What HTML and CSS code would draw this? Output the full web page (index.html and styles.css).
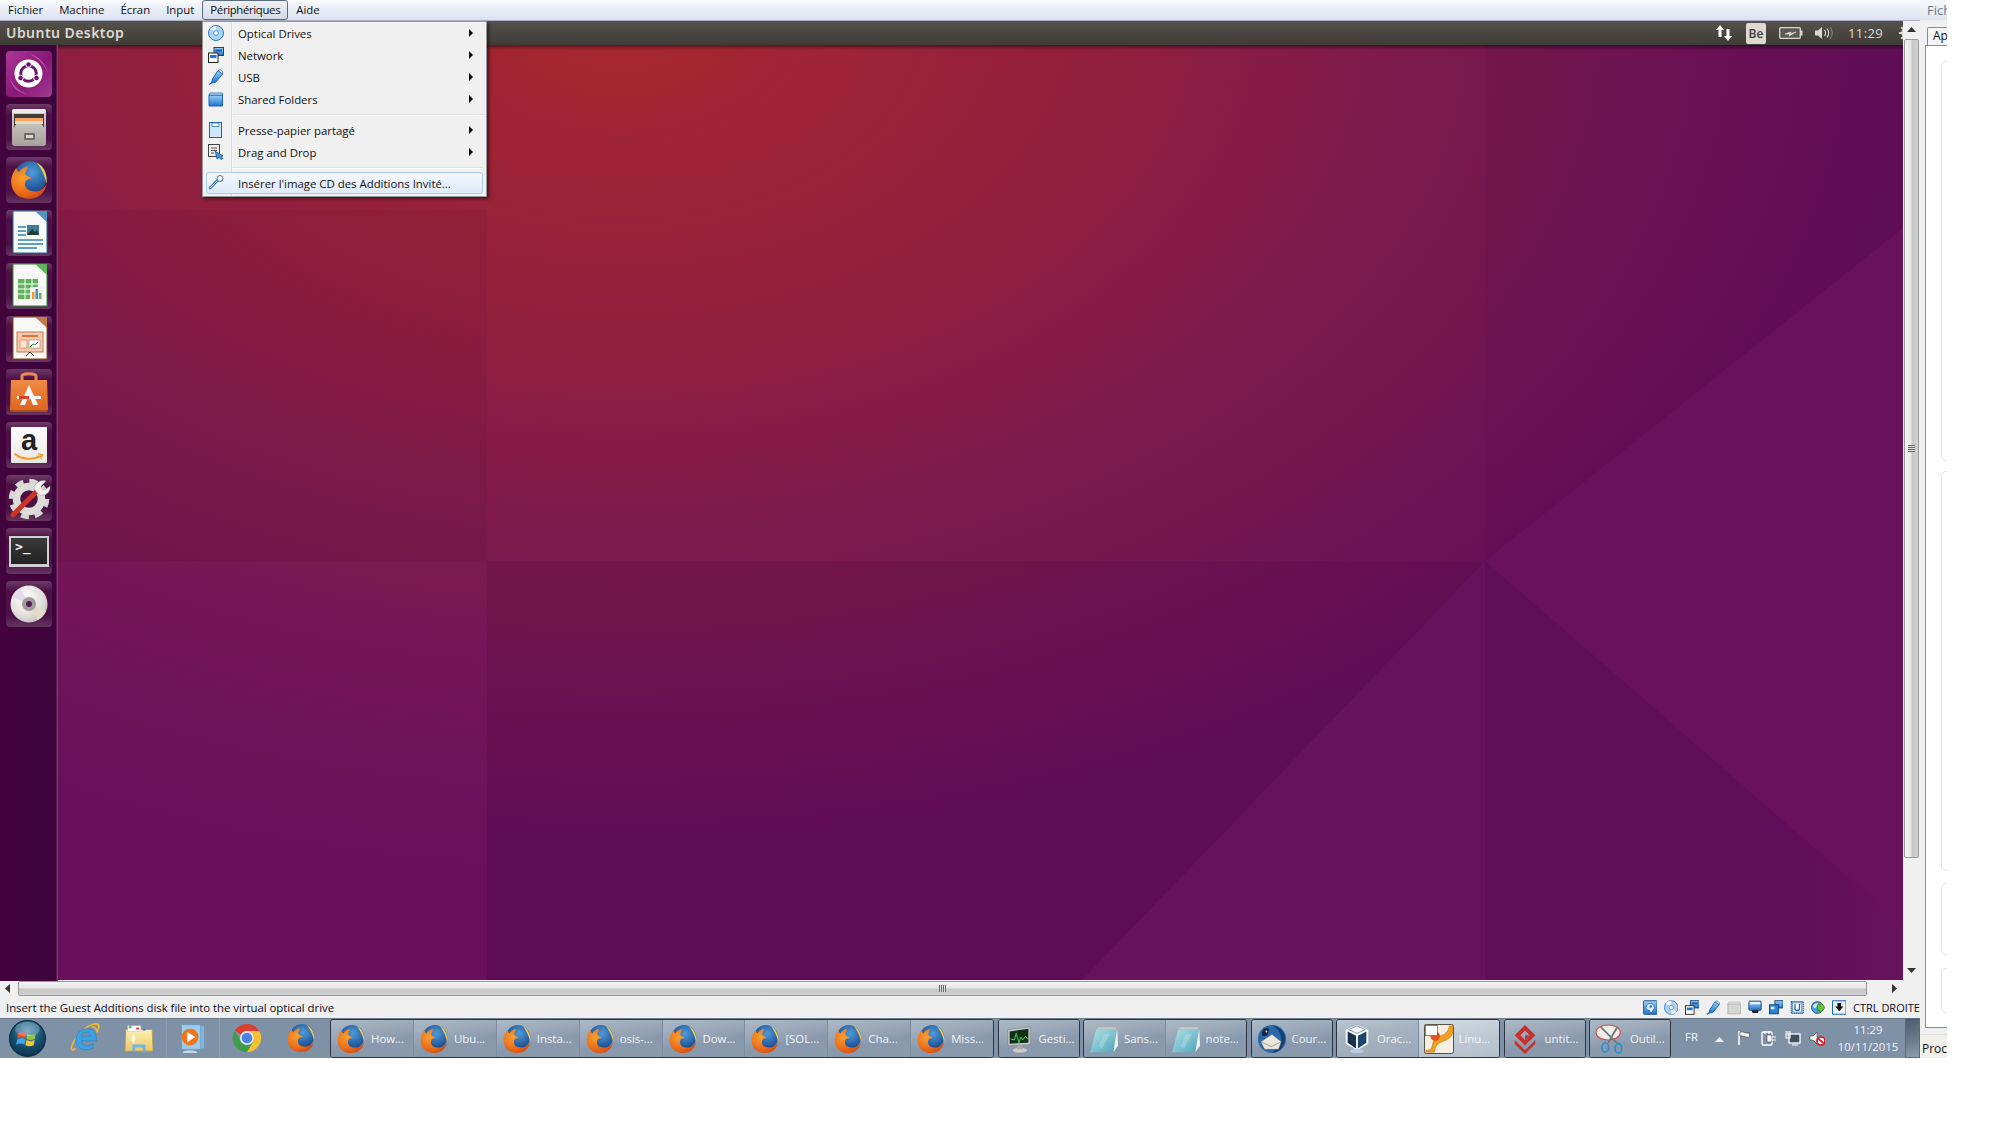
FILE: index.html
```html
<!DOCTYPE html>
<html lang="fr">
<head>
<meta charset="utf-8">
<title>Ubuntu Desktop - VirtualBox</title>
<link rel="stylesheet" href="styles.css">
</head>
<body>
<svg class="defs" width="0" height="0" aria-hidden="true">
  <defs>
    <radialGradient id="wp" gradientUnits="userSpaceOnUse" cx="0" cy="0" r="1" gradientTransform="translate(620 20) scale(1300 850)">
      <stop offset="0" stop-color="#a8282e"/><stop offset=".35" stop-color="#931f3d"/><stop offset=".6" stop-color="#7d1a4c"/><stop offset="1" stop-color="#620e59"/>
    </radialGradient>
    <linearGradient id="wpA" x1="0" y1="0" x2="1" y2="0"><stop offset="0" stop-color="#5f0e58"/><stop offset=".7" stop-color="#600e59"/><stop offset="1" stop-color="#67125c"/></linearGradient>
    <linearGradient id="wpShadow" x1="0" y1="0" x2="0" y2="1"><stop offset="0" stop-color="#000" stop-opacity=".45"/><stop offset="1" stop-color="#000" stop-opacity="0"/></linearGradient>
    <radialGradient id="ffOrange" cx=".35" cy=".35" r=".8"><stop offset="0" stop-color="#f9a12e"/><stop offset=".6" stop-color="#ea6a1a"/><stop offset="1" stop-color="#c8410f"/></radialGradient>
    <radialGradient id="ffBlue" cx=".55" cy=".35" r=".7"><stop offset="0" stop-color="#4f9bd8"/><stop offset="1" stop-color="#123f85"/></radialGradient>
    <radialGradient id="orb" cx=".5" cy=".3" r=".75"><stop offset="0" stop-color="#5b99bd"/><stop offset=".55" stop-color="#16506f"/><stop offset="1" stop-color="#0b2c47"/></radialGradient>
    <linearGradient id="blueBox" x1="0" y1="0" x2="0" y2="1"><stop offset="0" stop-color="#9fd0f7"/><stop offset="1" stop-color="#1d74cf"/></linearGradient>
    <linearGradient id="folderY" x1="0" y1="0" x2="0" y2="1"><stop offset="0" stop-color="#fdf1b6"/><stop offset="1" stop-color="#e9c766"/></linearGradient>
    <linearGradient id="note" x1="0" y1="0" x2="1" y2="1"><stop offset="0" stop-color="#b7e3ea"/><stop offset="1" stop-color="#4aa5b8"/></linearGradient>
    <linearGradient id="bag" x1="0" y1="0" x2="0" y2="1"><stop offset="0" stop-color="#f08a45"/><stop offset="1" stop-color="#e1661f"/></linearGradient>
    <linearGradient id="drawer" x1="0" y1="0" x2="0" y2="1"><stop offset="0" stop-color="#d6d3ce"/><stop offset="1" stop-color="#a5a29c"/></linearGradient>
    <radialGradient id="disc" cx=".4" cy=".35" r=".75"><stop offset="0" stop-color="#fff"/><stop offset=".6" stop-color="#e2e0dd"/><stop offset="1" stop-color="#bdbab6"/></radialGradient>

    <symbol id="i-ff" viewBox="0 0 32 32">
      <circle cx="17" cy="14" r="13" fill="url(#ffBlue)"/>
      <path d="M22 2c6 3 9 10 8 17-1-5-3-11-8-17z" fill="#f8cf4a"/>
      <path d="M6 6C3 10 1 15 2 20c1 7 7 11 14 11 8 0 13-5 14-12-2 4-6 7-10 6-5 0-8-3-7-7 0-2 3-3 5-3-1-2-5-2-5-4 0-2 2-3 2-6-4 1-6 3-7 5-1-1-2-2-2-4z" fill="url(#ffOrange)"/>
    </symbol>
    <symbol id="i-orb" viewBox="0 0 36 36">
      <circle cx="18" cy="18" r="17.5" fill="url(#orb)" stroke="#0a2a40"/>
      <path d="M9 13c3-1.500 5-1.500 8 0l-1 5c-3-1.500-5-1.500-8 0z" fill="#e8552a"/>
      <path d="M18 13.500c3 1.500 5 1.500 8 0l-1 5c-3 1.500-5 1.500-8 0z" fill="#8cc63f"/>
      <path d="M8 19c3-1.500 5-1.500 8 0l-1 5c-3-1.500-5-1.500-8 0z" fill="#3fa4e8"/>
      <path d="M17 19.500c3 1.500 5 1.500 8 0l-1 5c-3 1.500-5 1.500-8 0z" fill="#f8c52c"/>
      <ellipse cx="18" cy="9" rx="12" ry="7" fill="#fff" opacity=".22"/>
    </symbol>
    <symbol id="i-ie" viewBox="0 0 32 32">
      <path d="M6 27C1 31 0 28 4 20 9 10 20 1 28 1c4 0 3 4 1 8-1-3-3-5-6-5" fill="none" stroke="#e8b93a" stroke-width="1.800"/>
      <path d="M28 19H12c0 5 6 7 13 3l-1 5c-9 4-18 0-18-8 0-8 6-13 12-13 7 0 11 5 10 13zm-6-5c0-3-2-4-5-4s-5 2-5 4z" fill="#3aa3e3" stroke="#1e79bd" stroke-width=".6"/>
    </symbol>
    <symbol id="i-explorer" viewBox="0 0 32 32">
      <path d="M2 7h28l1 23H1z" fill="url(#folderY)" stroke="#b8953f" stroke-width=".8"/>
      <rect x="4" y="3" width="14" height="6" fill="#fff" stroke="#cbb98b" stroke-width=".5"/>
      <rect x="5" y="3.500" width="3" height="2" fill="#3dae49"/><rect x="13" y="5" width="3" height="2" fill="#d23c2c"/><rect x="20" y="6" width="3" height="2" fill="#2f80c9"/>
      <path d="M9 30v-7h14v7h-3v-4h-8v4z" fill="#6bb6e8"/><path d="M8 17l2 6 2-6-2-6z" fill="#fff" opacity=".8"/>
    </symbol>
    <symbol id="i-media" viewBox="0 0 32 32">
      <rect x="10" y="3" width="20" height="24" fill="#7fb6dc"/><rect x="6" y="2" width="20" height="26" fill="#9ccbe9" stroke="#5d9cc8" stroke-width=".6"/>
      <circle cx="15" cy="15" r="9" fill="#f0751c"/><path d="M12 9.500l8.500 5.500-8.500 5.500z" fill="#fff"/>
      <ellipse cx="15" cy="32" rx="8" ry="3" fill="#cfe8f8" opacity=".8"/>
    </symbol>
    <symbol id="i-chrome" viewBox="0 0 32 32">
      <path d="M16 1a15 15 0 0 1 13 7.500H16a7.500 7.500 0 0 0-6.500 3.800L3 8A15 15 0 0 1 16 1z" fill="#d9402f"/>
      <path d="M29 8.500A15 15 0 0 1 16 31l6.500-11.300a7.500 7.500 0 0 0 0-7.500z" fill="#f6c12d"/>
      <path d="M16 31A15 15 0 0 1 3 8l6.500 11.300a7.500 7.500 0 0 0 6.500 3.700l6.500-3.300z" fill="#3e9e4b"/>
      <path d="M29 8.500H16l6.500 3.800z" fill="#f6c12d"/>
      <circle cx="16" cy="16" r="7.500" fill="#e8e8e8"/><circle cx="16" cy="16" r="5.700" fill="#4a84e0"/>
    </symbol>
    <symbol id="i-monitor" viewBox="0 0 32 32">
      <path d="M4 6l24-3v19l-24 1z" fill="#c9c9c9" stroke="#777" stroke-width=".6"/>
      <path d="M6 8l20-3v15l-20 1z" fill="#10301a"/>
      <path d="M7 16l4 1 2-7 3 10 2-6 2 3 3-4 2 3" fill="none" stroke="#3fe04f" stroke-width="1"/>
      <ellipse cx="17" cy="28" rx="8" ry="3" fill="#ccc" stroke="#888" stroke-width=".5"/><rect x="14" y="23" width="6" height="4" fill="#aaa"/>
    </symbol>
    <symbol id="i-note" viewBox="0 0 32 32">
      <path d="M8 5l22 0-4 25L1 30z" fill="url(#note)"/>
      <path d="M30 5l1 18-5 7z" fill="#f3f3ef"/>
      <path d="M9 3h20v3H8z" fill="#c8c8c8" stroke="#8f8f8f" stroke-width=".4" stroke-dasharray="1 .6"/>
      <path d="M10 24L16 11l6 0-8 15z" fill="#fff" opacity=".22"/>
    </symbol>
    <symbol id="i-tb" viewBox="0 0 32 32">
      <circle cx="16" cy="16" r="15" fill="#2a69ad"/><path d="M16 1c9 2 14 8 14 15s-6 14-14 15c6-4 10-9 10-15S22 5 16 1z" fill="#153e74"/>
      <path d="M4 19l12-8 10 8-3 8H8z" fill="#ece7dc" stroke="#555" stroke-width=".5"/><path d="M4 19l11 5 11-5" fill="none" stroke="#777" stroke-width=".7"/>
      <path d="M7 6c2-2 5-2 6 0l-2 6-5 1c-1-3-1-5 1-7z" fill="#10233f"/><circle cx="10" cy="8" r="1" fill="#fff"/>
    </symbol>
    <symbol id="i-vbox" viewBox="0 0 32 32">
      <path d="M16 1L4 6v15l12 7 12-7V6z" fill="#fff"/>
      <path d="M6 8l9 4.500V26l-9-6z" fill="#17304f"/><path d="M26 8l-9 4.500V26l9-6z" fill="#1d4270"/>
      <path d="M16 2l9 4-9 4-9-4z" fill="#f4f6f8" stroke="#17304f" stroke-width=".5"/>
      <ellipse cx="16" cy="29" rx="7" ry="2.500" fill="#b8cbe0"/>
    </symbol>
    <symbol id="i-linux" viewBox="0 0 32 32">
      <rect x=".5" y=".5" width="31" height="31" rx="2" fill="#f3efe3" stroke="#4b4434"/>
      <path d="M2 28c5 0 6-1 7-6 1-6 6-8 10-10 5-2 7-5 8-10h4v6c-1 6-6 9-10 10-5 2-8 4-9 8l-1 4H2z" fill="#f2a01e" stroke="#b26a0f" stroke-width=".5"/>
      <circle cx="12" cy="13" r="5" fill="#e2531e"/>
      <rect x="1.500" y="1.500" width="13" height="11" fill="#fff" stroke="#333" stroke-width=".6"/>
    </symbol>
    <symbol id="i-red" viewBox="0 0 32 32">
      <path d="M16 1l11 11-11 11L5 12z" fill="#c9302c"/><path d="M16 7l5 5-5 5-5-5z" fill="#9ba9ba"/><path d="M16 12h5l-5 5z" fill="#c9302c"/>
      <path d="M5 17l11 11 11-11 0 4-11 11L5 21z" fill="#c9302c"/>
    </symbol>
    <symbol id="i-scissors" viewBox="0 0 32 32">
      <ellipse cx="14" cy="9" rx="13" ry="8" fill="#f1ede9" stroke="#d24a45" stroke-width="1.200"/>
      <path d="M6 3l18 18M24 3L14 20" stroke="#707a84" stroke-width="2" fill="none"/>
      <ellipse cx="11" cy="25" rx="3.500" ry="5" fill="none" stroke="#2b8ec9" stroke-width="1.800"/><ellipse cx="25" cy="26" rx="3.500" ry="5" fill="none" stroke="#2b8ec9" stroke-width="1.800"/>
    </symbol>

    <symbol id="s-hdd" viewBox="0 0 16 16"><rect x=".5" y=".5" width="15" height="15" rx="1" fill="url(#blueBox)" stroke="#16508f"/><path d="M3.500 8c0-6 9-6 9 0 0 2-2 3-2 5-2 1-3 .5-3-1 0-2-4 0-4-4z" fill="#dff0fd" stroke="#16508f" stroke-width=".7"/><circle cx="8.500" cy="7" r="1.400" fill="#1d74cf"/></symbol>
    <symbol id="s-cd" viewBox="0 0 16 16"><circle cx="8" cy="8" r="7.500" fill="#a9d4f5" stroke="#2f7fc9"/><path d="M8 8L2 3a7 7 0 0 1 6-2z" fill="#f2f7fb"/><path d="M8 8l6 5a7 7 0 0 1-6 2z" fill="#e8f2fb"/><circle cx="8" cy="8" r="2.400" fill="#fff" stroke="#2f7fc9" stroke-width=".8"/></symbol>
    <symbol id="s-net" viewBox="0 0 16 16"><rect x="6" y=".5" width="9.500" height="8" fill="url(#blueBox)" stroke="#10457d"/><rect x="7.500" y="2.500" width="6.500" height="2" fill="#175ea8"/><rect x=".5" y="6" width="9.500" height="9.500" fill="#fff" stroke="#222"/><rect x="2" y="8" width="6.500" height="3" fill="#1d74cf"/></symbol>
    <symbol id="s-usb" viewBox="0 0 16 16"><path d="M10 1.500l4.500 3.500-7 8.500-4 .5 1-4z" fill="url(#blueBox)" stroke="#1663b0"/><path d="M10 1.500l2-1 3 2.500-.5 2z" fill="#e4f1fb" stroke="#1663b0" stroke-width=".7"/><path d="M3.500 14L1 15.500" stroke="#1663b0" stroke-width="1.400"/></symbol>
    <symbol id="s-folder" viewBox="0 0 16 16"><path d="M1 4h13.500v11H1z" fill="url(#blueBox)" stroke="#1d66b5"/><path d="M1 4l1-2h12.500v2z" fill="#d5ebfb" stroke="#1d66b5" stroke-width=".8"/></symbol>
    <symbol id="s-folder-off" viewBox="0 0 16 16"><path d="M1 4h14v11H1z" fill="#d6d5d2" stroke="#b3b2ae"/><path d="M1 4l1-2h12.500v2z" fill="#ededeb" stroke="#b3b2ae" stroke-width=".8"/></symbol>
    <symbol id="s-display" viewBox="0 0 16 16"><rect x="1" y="1" width="13.500" height="10" rx="1" fill="url(#blueBox)" stroke="#10457d"/><rect x="2" y="2" width="11.500" height="2.500" fill="#e7f3fc"/><path d="M4 11h8l-1 3H5z" fill="#222"/></symbol>
    <symbol id="s-multi" viewBox="0 0 16 16"><rect x="6.500" y=".5" width="9" height="8" fill="url(#blueBox)" stroke="#10457d"/><rect x=".5" y="5" width="10" height="10" fill="#2a80d5" stroke="#10457d"/><rect x="2" y="7" width="4" height="3" fill="#e7f3fc"/></symbol>
    <symbol id="s-chip" viewBox="0 0 16 16"><rect x="1.500" y="1.500" width="13" height="13" fill="#cfe3f6" stroke="#1d5fae" stroke-dasharray="1.500 .7" stroke-width="1.400"/><rect x="3" y="3" width="10" height="10" fill="#fff" stroke="#1d5fae" stroke-width=".6"/><path d="M5.500 4v5c0 3 5 3 5 0V4" fill="none" stroke="#1d5fae" stroke-width="1.400"/></symbol>
    <symbol id="s-globe" viewBox="0 0 16 16"><circle cx="7" cy="8" r="6.500" fill="#4b9ad9" stroke="#1c5f9e"/><path d="M2 6c2-2 4-3 6-3l-1 3-3 3z" fill="#e8f1f7"/><path d="M7 5h3V2l5.500 6L10 14v-3H7z" fill="#67c23a" stroke="#2f7d1a" stroke-width=".7"/></symbol>
    <symbol id="s-down" viewBox="0 0 16 16"><rect x=".5" y=".5" width="15" height="15" rx="1" fill="#e9f2fa" stroke="#1d66b5" stroke-width="1.200"/><path d="M6 3h4v4h2.500L8 12 3.500 7H6z" fill="#111"/></symbol>
    <symbol id="t-flag" viewBox="0 0 16 16"><path d="M2 1v14" stroke="#fff" stroke-width="1.500"/><path d="M3 2c3-1 5 2 10 1-1 2-1 2 0 4-5 1-7-2-10-1z" fill="#fff" stroke="#222" stroke-width=".5"/></symbol>
    <symbol id="t-plug" viewBox="0 0 16 16"><rect x="1" y="2" width="10" height="13" rx="1" fill="none" stroke="#fff" stroke-width="1.400"/><path d="M6 5h5v7H6z" fill="#fff" stroke="#222" stroke-width=".5"/><path d="M11 7h4M11 10h4M4 1v3M8 1v3" stroke="#fff" stroke-width="1.200"/></symbol>
    <symbol id="t-netw" viewBox="0 0 16 16"><rect x="4" y="4" width="11" height="9" fill="#40505f" stroke="#fff" stroke-width="1.300"/><path d="M1 1v7h4V1M3 1v5M7 15h6" stroke="#fff" fill="none" stroke-width="1.100"/></symbol>
    <symbol id="t-mute" viewBox="0 0 16 16"><path d="M1 6h3l4-4v12l-4-4H1z" fill="#fff" stroke="#222" stroke-width=".5"/><circle cx="12" cy="11" r="4" fill="#fff" stroke="#d8161c" stroke-width="1.700"/><path d="M9.500 9l5 4" stroke="#d8161c" stroke-width="1.700"/></symbol>
    <symbol id="m-cd" viewBox="0 0 16 16"><circle cx="8" cy="8" r="7.500" fill="#a9d4f5" stroke="#2a74bd"/><path d="M8 8L2.500 3.500A7 7 0 0 1 8 1z" fill="#f4f9fd"/><circle cx="8" cy="8" r="2.400" fill="#fff" stroke="#2a74bd" stroke-width=".8"/></symbol>
    <symbol id="m-clip" viewBox="0 0 16 16"><rect x="1.500" y=".5" width="12" height="15" fill="#cfe7fb" stroke="#1d66b5"/><rect x="4" y="1" width="7" height="3.500" fill="#fff" stroke="#1d66b5" stroke-width=".7"/></symbol>
    <symbol id="m-dnd" viewBox="0 0 16 16"><rect x=".5" y=".5" width="11" height="12" fill="#f2f2f2" stroke="#444"/><path d="M3 4h6M3 6.500h6M3 9h3" stroke="#555"/><path d="M7 7l8 5-2 .5 2 2-2 1-2-2-2 1.500z" fill="#3e93e0" stroke="#16508f" stroke-width=".7"/></symbol>
    <symbol id="m-wrench" viewBox="0 0 16 16"><path d="M2 13l8-8" stroke="#4784c6" stroke-width="2.600" stroke-linecap="round"/><path d="M2 13l8-8" stroke="#dfeafa" stroke-width=".9"/><circle cx="12" cy="3.500" r="3" fill="#f7f9fb" stroke="#4a6b8e"/></symbol>
  </defs>
</svg>

<div class="screen">
  <div class="vm">
    <nav class="menubar">
      <span class="mb-item">Fichier</span><span class="mb-item">Machine</span><span class="mb-item">Écran</span><span class="mb-item">Input</span><span class="mb-item mb-active">Périphériques</span><span class="mb-item">Aide</span>
    </nav>

    <div class="guest-row">
      <div class="guest">
        <header class="panel">
          <span class="panel-title">Ubuntu Desktop</span>
          <div class="indicators">
            <svg class="ind ind-arrows" viewBox="0 0 18 18"><path d="M5 1L1 6h2.500v7h3V6H9zM13 17l4-5h-2.500V5h-3v7H9z" fill="#fff"/></svg>
            <span class="kbd">Be</span>
            <svg class="ind ind-batt" viewBox="0 0 24 12"><rect x=".7" y=".7" width="20.600" height="10.600" rx="1" fill="#5c5a54" stroke="#dcd8cf" stroke-width="1.300"/><rect x="21.500" y="3.500" width="2" height="5" fill="#dcd8cf"/><path d="M6 7l6-2-1 2 6-2-7 4 1-2z" fill="#e8e4db" stroke="#e8e4db" stroke-width=".6"/></svg>
            <svg class="ind ind-vol" viewBox="0 0 20 14"><path d="M0 4.500h3L7 1v12L3 9.500H0z" fill="#dcd8cf"/><path d="M9.500 4c1.500 2 1.500 4 0 6M12 2.500c2.300 3 2.300 6 0 9" fill="none" stroke="#dcd8cf" stroke-width="1.100"/><path d="M15 1c3 4 3 8 0 12" fill="none" stroke="#8b887f" stroke-width="1.100"/></svg>
            <span class="clock">11:29</span>
            <svg class="ind ind-gear" viewBox="0 0 16 16"><circle cx="8" cy="8" r="4.500" fill="none" stroke="#dcd8cf" stroke-width="2.400"/><path d="M8 0v3M8 13v3M0 8h3M13 8h3M2.300 2.300l2 2M11.700 11.700l2 2M2.300 13.700l2-2M11.700 4.300l2-2" stroke="#dcd8cf" stroke-width="2"/></svg>
          </div>
        </header>
        <div class="desk">
          <aside class="launcher">
            <div class="tile tile-dash">
              <svg class="licon" viewBox="0 0 46 46">
                <path d="M24 3c10 3 16 10 18 20-3-9-9-15-18-20zM4 28c2 8 8 14 17 15-8-3-13-8-17-15z" fill="#d68ac8" opacity=".55"/>
                <g transform="translate(-1.500 -1.500)">
                  <circle cx="24" cy="24" r="14" fill="#fff"/>
                  <circle cx="24" cy="24" r="7.800" fill="none" stroke="#6b1470" stroke-width="3"/>
                  <circle cx="24" cy="15" r="2.800" fill="#6b1470" stroke="#fff"/><circle cx="16" cy="28.500" r="2.800" fill="#6b1470" stroke="#fff"/><circle cx="32" cy="28.500" r="2.800" fill="#6b1470" stroke="#fff"/>
                </g>
              </svg>
            </div>
            <div class="tile">
              <svg class="licon" viewBox="0 0 46 46">
                <rect x="6" y="5" width="34" height="37" rx="3" fill="url(#drawer)"/>
                <rect x="6" y="5" width="34" height="4" rx="2" fill="#eeeceb"/>
                <rect x="8" y="10" width="30" height="14" fill="#413b36"/>
                <path d="M9 14h28v3H9z" fill="#f4a468"/><path d="M9 17h28v3H9z" fill="#e8d9c0"/>
                <path d="M8 24h30l-2-4H10z" fill="#c1bfba"/>
                <rect x="18" y="29" width="11" height="7" rx="1" fill="#6f6d68"/><rect x="20" y="31" width="7" height="3" fill="#d9d7d3"/>
              </svg>
            </div>
            <div class="tile"><svg class="licon-ff"><use href="#i-ff"/></svg></div>
            <div class="tile">
              <svg class="licon" viewBox="0 0 46 46">
                <path d="M7 1h24l10 10v32H7z" fill="#f8f8f6" stroke="#1f6b96" stroke-width="1"/><path d="M29 1l12 11V1z" fill="#4e96bd"/>
                <rect x="12" y="16" width="8" height="2" fill="#5da0c8"/><rect x="12" y="20" width="8" height="2" fill="#5da0c8"/><rect x="12" y="24" width="8" height="2" fill="#5da0c8"/>
                <rect x="21" y="15" width="12" height="10" fill="#3d7c9c"/><path d="M21 25l5-6 3 3 2-2 2 5z" fill="#213d30"/>
                <rect x="12" y="29" width="25" height="2" fill="#5da0c8"/><rect x="12" y="33" width="25" height="2" fill="#5da0c8"/><rect x="12" y="37" width="19" height="2" fill="#5da0c8"/>
              </svg>
            </div>
            <div class="tile">
              <svg class="licon" viewBox="0 0 46 46">
                <path d="M7 1h24l10 10v32H7z" fill="#f8f8f6" stroke="#2c8c2c" stroke-width="1"/><path d="M29 1l12 11V1z" fill="#5eb85a"/>
                <path d="M12 16h20v20H12z" fill="#5fb45b"/><path d="M12 21h20M12 26h20M12 31h20M19 16v20M26 16v20" stroke="#fff"/>
                <rect x="24" y="24" width="14" height="13" fill="#f2f2f0"/><rect x="26" y="29" width="2.500" height="7" fill="#e89a3c"/><rect x="29.500" y="26" width="2.500" height="10" fill="#3f8fc9"/><rect x="33" y="30" width="2.500" height="6" fill="#5fb45b"/>
              </svg>
            </div>
            <div class="tile">
              <svg class="licon" viewBox="0 0 46 46">
                <path d="M7 1h24l10 10v32H7z" fill="#f8f8f6" stroke="#8b4418" stroke-width="1"/><path d="M29 1l12 11V1z" fill="#c07a4c"/>
                <rect x="11" y="16" width="26" height="20" fill="#f6c9ac" stroke="#c57b4e"/><rect x="16" y="19" width="16" height="2" fill="#d9743d"/><rect x="14" y="24" width="7" height="8" fill="#fbe5d6" stroke="#d9743d" stroke-width=".6"/><rect x="23" y="24" width="11" height="8" fill="#fff" stroke="#777" stroke-width=".5"/><path d="M24 31l3-3 2 1 3-3" stroke="#3c9a3c" fill="none"/><path d="M24 36l-4 4M24 36l4 4" stroke="#333"/>
              </svg>
            </div>
            <div class="tile">
              <svg class="licon" viewBox="0 0 46 46">
                <path d="M16 12V7c0-3 14-3 14 0v5" fill="none" stroke="#e88a50" stroke-width="3"/>
                <path d="M5 11h36l1 30H4z" fill="url(#bag)"/><path d="M4 41h38l-1 2H5z" fill="#a84f1a"/>
                <path d="M23 16l9 20h-5l-4-10-4 10h-5z" fill="#fff"/><rect x="11" y="27" width="24" height="3" fill="#fff"/><rect x="13" y="27" width="10" height="3" fill="#d8402a"/>
              </svg>
            </div>
            <div class="tile tile-amazon"><div class="amazon"><span class="amazon-a">a</span><svg class="smile" viewBox="0 0 34 10"><path d="M1 1c9 7 21 7 30 2" fill="none" stroke="#f39a1d" stroke-width="2.200"/><path d="M27 1l5 1-2 5" fill="none" stroke="#f39a1d" stroke-width="1.500"/></svg></div></div>
            <div class="tile">
              <svg class="licon" viewBox="0 0 46 46">
                <circle cx="23" cy="24" r="18" fill="none" stroke="#d8d6d2" stroke-width="4.500" stroke-dasharray="8 6.100"/>
                <circle cx="23" cy="24" r="12.500" fill="none" stroke="#dedcd8" stroke-width="7.500"/>
                <path d="M7 40L33 14" stroke="#c8362a" stroke-width="5" stroke-linecap="round"/>
                <path d="M28 14c0-6 7-10 12-8l-5 5 1 3 3 1 5-4c1 6-5 11-11 9z" fill="#f0efec" stroke="#999" stroke-width=".5"/>
              </svg>
            </div>
            <div class="tile"><div class="term"><span class="term-prompt">&gt;_</span></div></div>
            <div class="tile">
              <svg class="licon" viewBox="0 0 46 46">
                <circle cx="23" cy="23" r="18.500" fill="url(#disc)"/>
                <path d="M23 23L6 16a18 18 0 0 1 8-9z" fill="#e4dbe6"/><path d="M23 23l17 7a18 18 0 0 1-8 9z" fill="#e2dcc9"/>
                <circle cx="23" cy="23" r="7" fill="#9f9b9a"/><circle cx="23" cy="23" r="3" fill="#5c1a53"/>
              </svg>
            </div>
          </aside>
          <svg class="wallpaper" viewBox="58 45 1845 935" preserveAspectRatio="none">
            <rect x="58" y="45" width="1845" height="935" fill="url(#wp)"/>
            <rect x="58" y="210" width="429" height="351" fill="#50082f" opacity=".08"/>
            <rect x="58" y="561" width="429" height="419" fill="#80186a" opacity=".2"/>
            <rect x="487" y="561" width="998" height="419" fill="#3c0040" opacity=".1"/>
            <rect x="1485" y="45" width="418" height="516" fill="#3c0040" opacity=".07"/>
            <polygon points="1485,561 1903,228 1903,925" fill="#69125c"/>
            <polygon points="1485,561 1082,980 1485,980" fill="#67125c"/>
            <polygon points="1485,561 1903,925 1903,980 1485,980" fill="url(#wpA)"/>
            <rect x="58" y="45" width="1845" height="5" fill="url(#wpShadow)"/>
          </svg>
        </div>
      </div>
      <div class="vscroll">
        <svg class="sb-arrow" viewBox="0 0 9 5"><path d="M0 5l4.500-5L9 5z" fill="#333"/></svg>
        <div class="vthumb"><span class="grip"></span></div>
        <svg class="sb-arrow sb-arrow-down" viewBox="0 0 9 5"><path d="M0 0l4.500 5L9 0z" fill="#333"/></svg>
      </div>
    </div>

    <div class="hscroll">
      <svg class="hs-arrow" viewBox="0 0 5 9"><path d="M5 0L0 4.500 5 9z" fill="#333"/></svg>
      <div class="hthumb"><span class="hgrip"></span></div>
      <svg class="hs-arrow hs-arrow-r" viewBox="0 0 5 9"><path d="M0 0l5 4.500L0 9z" fill="#333"/></svg>
    </div>

    <footer class="status">
      <span class="status-text">Insert the Guest Additions disk file into the virtual optical drive</span>
      <div class="status-icons">
        <svg class="sicon"><use href="#s-hdd"/></svg>
        <svg class="sicon"><use href="#s-cd"/></svg>
        <svg class="sicon"><use href="#s-net"/></svg>
        <svg class="sicon"><use href="#s-usb"/></svg>
        <svg class="sicon"><use href="#s-folder-off"/></svg>
        <svg class="sicon"><use href="#s-display"/></svg>
        <svg class="sicon"><use href="#s-multi"/></svg>
        <svg class="sicon"><use href="#s-chip"/></svg>
        <svg class="sicon"><use href="#s-globe"/></svg>
        <svg class="sicon"><use href="#s-down"/></svg>
      </div>
      <span class="hostkey">CTRL DROITE</span>
    </footer>

    <div class="taskbar">
      <div class="start"><svg class="orb"><use href="#i-orb"/></svg></div>
      <div class="ql"><svg class="ql-icon"><use href="#i-ie"/></svg></div>
      <div class="ql"><svg class="ql-icon"><use href="#i-explorer"/></svg></div>
      <div class="ql ql-sep"><svg class="ql-icon"><use href="#i-media"/></svg></div>
      <div class="ql"><svg class="ql-icon"><use href="#i-chrome"/></svg></div>
      <div class="ql"><svg class="ql-icon"><use href="#i-ff"/></svg></div>
      <div class="tasks">
        <div class="group group-wide">
          <div class="task"><svg class="ticon"><use href="#i-ff"/></svg><span>How...</span></div>
          <div class="task"><svg class="ticon"><use href="#i-ff"/></svg><span>Ubu...</span></div>
          <div class="task"><svg class="ticon"><use href="#i-ff"/></svg><span>Insta...</span></div>
          <div class="task"><svg class="ticon"><use href="#i-ff"/></svg><span>osis-...</span></div>
          <div class="task"><svg class="ticon"><use href="#i-ff"/></svg><span>Dow...</span></div>
          <div class="task"><svg class="ticon"><use href="#i-ff"/></svg><span>[SOL...</span></div>
          <div class="task"><svg class="ticon"><use href="#i-ff"/></svg><span>Cha...</span></div>
          <div class="task"><svg class="ticon"><use href="#i-ff"/></svg><span>Miss...</span></div>
        </div>
        <div class="group"><div class="task"><svg class="ticon"><use href="#i-monitor"/></svg><span>Gesti...</span></div></div>
        <div class="group group-two">
          <div class="task"><svg class="ticon"><use href="#i-note"/></svg><span>Sans...</span></div>
          <div class="task"><svg class="ticon"><use href="#i-note"/></svg><span>note...</span></div>
        </div>
        <div class="group"><div class="task"><svg class="ticon"><use href="#i-tb"/></svg><span>Cour...</span></div></div>
        <div class="group group-two">
          <div class="task task-hot"><svg class="ticon"><use href="#i-vbox"/></svg><span>Orac...</span></div>
          <div class="task task-on"><svg class="ticon"><use href="#i-linux"/></svg><span>Linu...</span></div>
        </div>
        <div class="group"><div class="task"><svg class="ticon"><use href="#i-red"/></svg><span>untit...</span></div></div>
        <div class="group"><div class="task"><svg class="ticon"><use href="#i-scissors"/></svg><span>Outil...</span></div></div>
      </div>
      <div class="tray">
        <span class="lang">FR</span>
        <svg class="chev" viewBox="0 0 9 5"><path d="M0 5l4.500-5L9 5z" fill="#f2f5f8"/></svg>
        <svg class="tray-icon"><use href="#t-flag"/></svg>
        <svg class="tray-icon"><use href="#t-plug"/></svg>
        <svg class="tray-icon"><use href="#t-netw"/></svg>
        <svg class="tray-icon"><use href="#t-mute"/></svg>
        <div class="tray-clock"><span>11:29</span><span>10/11/2015</span></div>
      </div>
      <div class="show-desktop"></div>
    </div>

    <div class="menu">
      <div class="menu-item"><svg class="micon"><use href="#m-cd"/></svg><span class="menu-label">Optical Drives</span><i class="sub"></i></div>
      <div class="menu-item"><svg class="micon"><use href="#s-net"/></svg><span class="menu-label">Network</span><i class="sub"></i></div>
      <div class="menu-item"><svg class="micon"><use href="#s-usb"/></svg><span class="menu-label">USB</span><i class="sub"></i></div>
      <div class="menu-item"><svg class="micon"><use href="#s-folder"/></svg><span class="menu-label">Shared Folders</span><i class="sub"></i></div>
      <div class="menu-sep"></div>
      <div class="menu-item"><svg class="micon"><use href="#m-clip"/></svg><span class="menu-label">Presse-papier partagé</span><i class="sub"></i></div>
      <div class="menu-item"><svg class="micon"><use href="#m-dnd"/></svg><span class="menu-label">Drag and Drop</span><i class="sub"></i></div>
      <div class="menu-sep"></div>
      <div class="menu-item menu-hover"><svg class="micon"><use href="#m-wrench"/></svg><span class="menu-label">Insérer l'image CD des Additions Invité...</span></div>
    </div>
  </div>

  <div class="side">
    <div class="side-menubar">Fichier</div>
    <div class="side-tabs"><span class="side-tab">Appliquer</span></div>
    <div class="side-panel">
      <div class="gbox gbox-a"></div>
      <div class="gbox gbox-b"></div>
      <div class="gbox gbox-c"></div>
      <div class="gbox gbox-d"></div>
    </div>
    <div class="side-status">Processus</div>
  </div>
</div>
</body>
</html>
```

FILE: styles.css
```css
* { box-sizing: border-box; }
html, body { margin: 0; padding: 0; background: #fff; }
body { width: 2008px; height: 1136px; overflow: hidden; font-family: "Open Sans", "Noto Sans", sans-serif; font-size: 11.4px; color: #111; }
svg { display: block; }
.defs { position: absolute; }

.screen { display: flex; width: 1947px; height: 1058px; }
.vm { position: relative; width: 1920px; display: flex; flex-direction: column; background: #f0f0f0; flex: none; }

/* host menu bar */
.menubar { height: 21px; display: flex; align-items: center; background: linear-gradient(#fbfcfe 0, #eef1f9 30%, #dbe2f2 100%); border-bottom: 1px solid #a8b0c4; }
.mb-item { padding: 0 7px; line-height: 18px; border: 1px solid transparent; }
.mb-active { border: 1px solid #5b6b7e; border-radius: 3px; background: linear-gradient(#eef1f6, #d5dbe5); letter-spacing: -.35px; }

/* guest */
.guest-row { display: flex; height: 960px; }
.guest { width: 1903px; display: flex; flex-direction: column; }
.panel { height: 24px; display: flex; align-items: center; justify-content: space-between; background: linear-gradient(#55524b, #3f3c37); color: #dfdbd2; overflow: hidden; }
.panel-title { font-family: "Noto Sans", sans-serif; font-weight: 600; font-size: 14px; letter-spacing: .45px; padding-left: 6px; margin-top: -1px; color: #ded9cf; }
.indicators { display: flex; align-items: center; }
.ind-arrows { width: 18px; height: 18px; margin-right: 13px; }
.kbd { width: 20px; height: 21px; border-radius: 2px; background: #dedad1; color: #3c3b37; font-size: 12px; font-weight: 600; text-align: center; line-height: 21px; margin-right: 13px; }
.ind-batt { width: 24px; height: 12px; margin-right: 12px; }
.ind-vol { width: 20px; height: 16px; margin-right: 13px; }
.clock { font-size: 13px; letter-spacing: .4px; color: #dfdbd2; width: 38px; margin-right: 13px; }
.ind-gear { width: 16px; height: 16px; margin-right: -12px; }

.desk { flex: 1; display: flex; min-height: 0; }
.launcher { width: 58px; flex: none; padding: 6px 6px 0; display: flex; flex-direction: column; gap: 7px; background: linear-gradient(90deg, #43043d, #3f033b 96%, #8a4a80 100%); }
.tile { width: 46px; height: 46px; flex: none; border-radius: 4px; display: flex; align-items: center; justify-content: center; background: linear-gradient(180deg, #6d3b66, #4c1046 22%, #4c1046 75%, #663660); }
.tile-dash { background: linear-gradient(135deg, #a93a96, #8a1677 55%, #a03c90); }
.licon { width: 46px; height: 46px; }
.licon-ff { width: 40px; height: 40px; }
.amazon { width: 36px; height: 36px; background: linear-gradient(#fff, #e8e6e2); border-radius: 1px; text-align: center; overflow: hidden; }
.amazon-a { font-family: "Liberation Sans", sans-serif; font-weight: 700; font-size: 29px; line-height: 26px; color: #222; display: block; }
.smile { width: 32px; height: 9px; margin: 0 auto; }
.term { width: 40px; height: 31px; margin-top: 1px; background: linear-gradient(#3a3a3a, #222); border: 2px solid #cfcfcf; border-bottom-width: 3px; padding: 1px 4px; }
.term-prompt { font-family: "DejaVu Sans Mono", monospace; font-size: 13px; line-height: 16px; font-weight: 700; color: #f0f0f0; display: block; }
.wallpaper { flex: 1; min-width: 0; height: 935px; }

/* scrollbars */
.vscroll { width: 17px; flex: none; background: #f0f0f0; display: flex; flex-direction: column; align-items: center; padding-top: 6px; }
.sb-arrow { width: 9px; height: 5px; flex: none; }
.sb-arrow-down { margin-top: 110px; }
.vthumb { width: 15px; height: 819px; margin-top: 7px; border: 1px solid #9a9a9a; border-radius: 2px; background: linear-gradient(90deg, #f4f4f4, #e6e6e6 45%, #c6c6c6 55%, #d2d2d2); display: flex; align-items: center; justify-content: center; flex: none; }
.grip { display: block; width: 7px; height: 7px; background: repeating-linear-gradient(#666 0 1px, #ddd 1px 2px); }
.hscroll { height: 15px; display: flex; align-items: center; background: #f0f0f0; padding-left: 5px; }
.hs-arrow { width: 5px; height: 9px; flex: none; }
.hthumb { width: 1849px; height: 15px; margin-left: 8px; flex: none; border: 1px solid #9a9a9a; border-radius: 2px; background: linear-gradient(#f4f4f4, #e6e6e6 45%, #c6c6c6 55%, #d2d2d2); display: flex; align-items: center; justify-content: center; }
.hgrip { display: block; width: 7px; height: 7px; background: repeating-linear-gradient(90deg, #666 0 1px, #ddd 1px 2px); }
.hs-arrow-r { margin-left: 25px; }

/* status bar */
.status { height: 22px; display: flex; align-items: center; padding-left: 6px; background: #f0f0f0; }
.status-text { flex: 1; color: #0c0c1c; letter-spacing: -.03px; }
.status-icons { display: flex; gap: 6.500px; margin-right: 7px; }
.sicon { width: 14.500px; height: 15px; }
.hostkey { width: 67px; white-space: nowrap; color: #0c0c1c; font-size: 11px; }

/* taskbar */
.taskbar { height: 40px; display: flex; align-items: stretch; background: #7f91a6; box-shadow: inset 0 1px 0 #6b7b8c; }
.start { width: 58px; flex: none; display: flex; align-items: center; padding-left: 9px; }
.orb { width: 37px; height: 37px; }
.ql { width: 54px; flex: none; display: flex; align-items: center; justify-content: center; }
.ql-sep { border-left: 1px solid #8fa0b3; border-right: 1px solid #8fa0b3; }
.ql-sep .ql-icon { margin-right: 5px; }
.ql-icon { width: 30px; height: 30px; }
.tasks { display: flex; gap: 3.500px; padding-left: 2px; margin-top: 1px; flex: none; }
.group { width: 82px; display: flex; border: 1px solid #2c3540; border-radius: 3px; box-shadow: inset 0 0 0 1px rgba(255,255,255,.25); overflow: hidden; }
.group-two { width: 164px; }
.group-wide { width: 664px; }
.task { flex: 1 1 0; min-width: 0; display: flex; align-items: center; gap: 5px; padding-left: 5px; color: #f2f5f8; background: linear-gradient(170deg, #aeb9c6 0, #9aa8b8 35%, #8999ad 60%, #8b9bae 100%); border-right: 1px solid #7d8da1; white-space: nowrap; overflow: hidden; }
.task:last-child { border-right: 0; }
.ticon { width: 30px; height: 30px; flex: none; }
.task-hot { background: linear-gradient(170deg, #bcc6d1, #a5b2c1 40%, #9aa8b9); }
.task-on { background: linear-gradient(170deg, #d4dbe3, #c0cad5 50%, #b3bfcc); }
.tray { flex: 1; display: flex; align-items: center; color: #f2f5f8; padding-left: 14px; }
.lang { width: 30px; margin-bottom: 4px; }
.chev { width: 9px; height: 5px; margin-right: 13px; margin-top: 3px; }
.tray-icon { width: 16px; height: 16px; margin-right: 8px; }
.tray-clock { display: flex; flex-direction: column; align-items: center; width: 70px; line-height: 17px; white-space: nowrap; }
.show-desktop { width: 15px; flex: none; border: 1px solid #5a6b7d; background: linear-gradient(160deg, #4d5c6c, #6d7e90 60%, #8f9fb0); }

/* dropdown menu */
.menu { position: absolute; left: 202px; top: 21px; width: 285px; height: 176px; padding: 0 3px; border: 1px solid #979797; background: linear-gradient(90deg, #f1f1f1 28px, #dcdcdc 28px, #dcdcdc 29px, #fff 29px, #f0f0f0 30px); box-shadow: 2px 2px 3px rgba(0,0,0,.5); z-index: 5; }
.menu-item { height: 22px; display: flex; align-items: center; position: relative; padding-left: 1px; border: 1px solid transparent; }
.micon { width: 16px; height: 16px; flex: none; }
.menu-label { margin-left: 14px; white-space: nowrap; }
.sub { position: absolute; right: 9px; top: 6px; width: 0; height: 0; border-left: 4px solid #000; border-top: 4px solid transparent; border-bottom: 4px solid transparent; }
.menu-sep { height: 2px; margin: 4px 0 3px 26px; background: #e0e0e0; border-bottom: 1px solid #fff; }
.menu-hover { height: 22px; border: 1px solid #aeccea; border-radius: 3px; background: linear-gradient(#f3f8fd, #dfeafa); }

/* neighbouring window, cut off on the right */
.side { width: 27px; flex: none; overflow: hidden; background: #f0f0f0; display: flex; flex-direction: column; }
.side-menubar { height: 20px; flex: none; padding-left: 7px; line-height: 20px; color: #6d7c8d; font-size: 13px; background: linear-gradient(#f7f9fc, #dfe5f1); white-space: nowrap; }
.side-tabs { height: 25px; flex: none; padding: 7px 0 0 7px; }
.side-tab { display: block; width: 60px; height: 18px; padding-left: 5px; line-height: 16px; border: 1px solid #8c8c8c; border-bottom: 0; background: #f4f4f4; white-space: nowrap; color: #111; border-radius: 2px 2px 0 0; font-size: 12px; }
.side-panel { height: 983px; flex: none; margin-left: 5px; width: 60px; background: #fff; border: 1px solid #8c8c8c; padding: 15px 0 0 15px; display: flex; flex-direction: column; }
.gbox { width: 60px; flex: none; border: 1px solid #dde3ea; border-radius: 5px; }
.gbox-a { height: 400px; }
.gbox-b { height: 400px; margin-top: 10px; }
.gbox-c { height: 72px; margin-top: 12px; }
.gbox-d { height: 45px; margin-top: 13px; }
.side-status { flex: 1; padding: 7px 0 0 2px; border-top: 1px solid #e2e2e2; margin-top: 6px; background: #f2efeb; color: #111; white-space: nowrap; line-height: 14px; font-size: 12px; }
```
